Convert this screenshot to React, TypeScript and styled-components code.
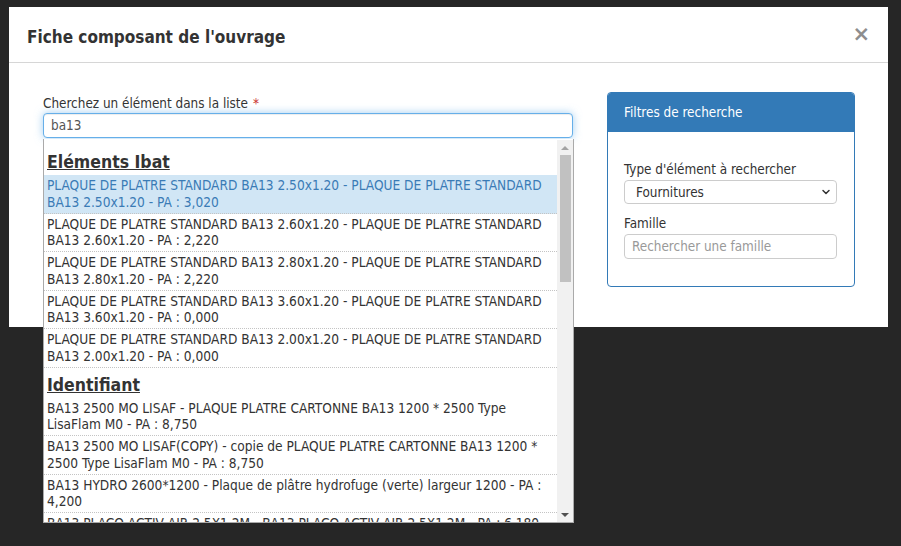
import React from "react";
import styled, { createGlobalStyle } from "styled-components";
import { ChevronDown } from "lucide-react";

const FONT = `"DejaVu Sans Condensed", "DejaVu Sans", Verdana, sans-serif`;

const GlobalStyle = createGlobalStyle`
  html, body {
    margin: 0;
    padding: 0;
    background: #262626;
    font-family: ${FONT};
  }
  * { box-sizing: border-box; }
`;

const Page = styled.div`
  min-height: 546px;
  padding: 7px 13px 0 9px;
`;

const Modal = styled.div`
  width: 879px;
  background: #fff;
`;

const Header = styled.div`
  height: 56px;
  display: flex;
  align-items: center;
  justify-content: space-between;
  padding: 0 18px 0 18px;
  border-bottom: 1px solid #d6d6d6;
`;

const Title = styled.h4`
  margin: 4px 0 0;
  font-size: 17px;
  font-weight: bold;
  color: #333;
  line-height: 20px;
`;

const Close = styled.button`
  border: 0;
  background: transparent;
  padding: 0;
  font-family: "DejaVu Sans", sans-serif;
  font-size: 21px;
  font-weight: bold;
  line-height: 1;
  color: #8e8e8e;
  cursor: pointer;
`;

const Body = styled.div`
  display: flex;
  gap: 33px;
  padding: 29px 33px 40px 34px;
`;

const LeftCol = styled.div`
  width: 531px;
  padding-top: 3px;
`;

const Label = styled.label`
  display: block;
  font-size: 13.4px;
  line-height: 18px;
  color: #333;
`;

const Required = styled.span`
  color: #c9302c;
  margin-left: 5px;
`;

const SearchWrap = styled.div`
  position: relative;
  width: 531px;
`;

const SearchInput = styled.input`
  display: block;
  width: 530px;
  height: 25px;
  padding: 0 7px;
  border: 1px solid #66afe9;
  border-radius: 4px;
  outline: none;
  font-family: ${FONT};
  font-size: 13.4px;
  color: #555;
  box-shadow: inset 0 1px 1px rgba(0, 0, 0, 0.075), 0 0 8px rgba(102, 175, 233, 0.6);
`;

const Dropdown = styled.div`
  position: absolute;
  top: 26px;
  left: 0;
  width: 531px;
  height: 384px;
  display: flex;
  background: #fff;
  border: 1px solid #aaa;
  border-top: none;
  z-index: 10;
`;

const List = styled.ul`
  flex: 1;
  list-style: none;
  margin: 0;
  padding: 6px 0 0;
  overflow: hidden;
`;

const Scrollbar = styled.div`
  width: 16px;
  margin-top: 1px;
  display: flex;
  flex-direction: column;
  background: #f1f1f1;
`;

const ScrollButton = styled.div`
  height: 15px;
  display: flex;
  align-items: center;
  justify-content: center;
`;

const Track = styled.div`
  flex: 1;
  padding: 0 2px 0 3px;
`;

const Thumb = styled.div`
  height: 127px;
  background: #c1c1c1;
`;

const GroupHeading = styled.li`
  padding: 5px 3px 1px;
  font-size: 17.5px;
  font-weight: bold;
  line-height: 24px;
  color: #333;
  text-decoration: underline;
`;

const Option = styled.li<{ $active?: boolean }>`
  padding: 2px 3px;
  font-size: 13.6px;
  line-height: 16.75px;
  color: ${(p) => (p.$active ? "#3a7bb5" : "#333")};
  background: ${(p) => (p.$active ? "#d1e6f5" : "transparent")};
  border-bottom: 1px dotted #c4c4c4;
  cursor: pointer;
`;

const RightCol = styled.div`
  width: 248px;
`;

const Panel = styled.div`
  border: 1px solid #337ab7;
  border-radius: 4px;
  overflow: hidden;
`;

const PanelHeading = styled.div`
  background: #337ab7;
  color: #fff;
  font-size: 13.4px;
  line-height: 39px;
  padding: 0 16px;
`;

const PanelBody = styled.div`
  padding: 29px 17px 27px 16px;
`;

const Field = styled.div<{ $gap?: number }>`
  margin-top: ${(p) => p.$gap ?? 0}px;
`;

const FieldLabel = styled.label`
  display: block;
  font-size: 13.4px;
  line-height: 18px;
  color: #333;
  margin-bottom: 1px;
`;

const SelectWrap = styled.div`
  position: relative;
  width: 213px;
`;

const Select = styled.select`
  display: block;
  width: 213px;
  height: 24px;
  padding: 0 24px 0 11px;
  border: 1px solid #ccc;
  border-radius: 4px;
  background: #fff;
  appearance: none;
  font-family: ${FONT};
  font-size: 13.4px;
  color: #333;
  outline: none;
`;

const Chevron = styled(ChevronDown)`
  position: absolute;
  right: 5px;
  top: 6px;
  pointer-events: none;
  color: #333;
`;

const TextInput = styled.input`
  display: block;
  width: 213px;
  height: 25px;
  padding: 0 7px;
  border: 1px solid #ccc;
  border-radius: 4px;
  outline: none;
  font-family: ${FONT};
  font-size: 13.4px;
  color: #555;
  &::placeholder {
    color: #999;
  }
`;

type Group = { title: string; items: string[] };

const groups: Group[] = [
  {
    title: "Eléments Ibat",
    items: [
      "PLAQUE DE PLATRE STANDARD BA13 2.50x1.20 - PLAQUE DE PLATRE STANDARD BA13 2.50x1.20 - PA : 3,020",
      "PLAQUE DE PLATRE STANDARD BA13 2.60x1.20 - PLAQUE DE PLATRE STANDARD BA13 2.60x1.20 - PA : 2,220",
      "PLAQUE DE PLATRE STANDARD BA13 2.80x1.20 - PLAQUE DE PLATRE STANDARD BA13 2.80x1.20 - PA : 2,220",
      "PLAQUE DE PLATRE STANDARD BA13 3.60x1.20 - PLAQUE DE PLATRE STANDARD BA13 3.60x1.20 - PA : 0,000",
      "PLAQUE DE PLATRE STANDARD BA13 2.00x1.20 - PLAQUE DE PLATRE STANDARD BA13 2.00x1.20 - PA : 0,000",
    ],
  },
  {
    title: "Identifiant",
    items: [
      "BA13 2500 MO LISAF - PLAQUE PLATRE CARTONNE BA13 1200 * 2500 Type LisaFlam M0 - PA : 8,750",
      "BA13 2500 MO LISAF(COPY) - copie de PLAQUE PLATRE CARTONNE BA13 1200 * 2500 Type LisaFlam M0 - PA : 8,750",
      "BA13 HYDRO 2600*1200 - Plaque de plâtre hydrofuge (verte) largeur 1200 - PA : 4,200",
      "BA13 PLACO ACTIV AIR 2.5X1.2M - BA13 PLACO ACTIV AIR 2.5X1.2M - PA : 6,180",
      "BA13 PLACO DUO TECH 2.6X1.2M - PLAQUE PLACO DUO'TECH BA13 2.60x1.20 - PA : 9,340",
    ],
  },
];

function UpArrow({ color }: { color: string }) {
  return (
    <svg width="8" height="4" viewBox="0 0 8 4" aria-hidden="true">
      <path d="M0 4 L4 0 L8 4 Z" fill={color} />
    </svg>
  );
}

function DownArrow({ color }: { color: string }) {
  return (
    <svg width="8" height="4" viewBox="0 0 8 4" aria-hidden="true">
      <path d="M0 0 L8 0 L4 4 Z" fill={color} />
    </svg>
  );
}

export default function App() {
  return (
    <>
      <GlobalStyle />
      <Page>
        <Modal>
          <Header>
            <Title>Fiche composant de l'ouvrage</Title>
            <Close aria-label="Fermer">×</Close>
          </Header>
          <Body>
            <LeftCol>
              <Label htmlFor="search">
                Cherchez un élément dans la liste<Required>*</Required>
              </Label>
              <SearchWrap>
                <SearchInput id="search" defaultValue="ba13" />
                <Dropdown>
                  <List>
                    {groups.map((g, gi) => (
                      <React.Fragment key={g.title}>
                        <GroupHeading>{g.title}</GroupHeading>
                        {g.items.map((it, ii) => (
                          <Option key={it} $active={gi === 0 && ii === 0}>
                            {it}
                          </Option>
                        ))}
                      </React.Fragment>
                    ))}
                  </List>
                  <Scrollbar>
                    <ScrollButton>
                      <UpArrow color="#a3a3a3" />
                    </ScrollButton>
                    <Track>
                      <Thumb />
                    </Track>
                    <ScrollButton>
                      <DownArrow color="#505050" />
                    </ScrollButton>
                  </Scrollbar>
                </Dropdown>
              </SearchWrap>
            </LeftCol>
            <RightCol>
              <Panel>
                <PanelHeading>Filtres de recherche</PanelHeading>
                <PanelBody>
                  <Field>
                    <FieldLabel>Type d'élément à rechercher</FieldLabel>
                    <SelectWrap>
                      <Select defaultValue="Fournitures">
                        <option>Fournitures</option>
                        <option>Main d'oeuvre</option>
                        <option>Matériel</option>
                      </Select>
                      <Chevron size={12} strokeWidth={3} />
                    </SelectWrap>
                  </Field>
                  <Field $gap={11}>
                    <FieldLabel>Famille</FieldLabel>
                    <TextInput placeholder="Rechercher une famille" />
                  </Field>
                </PanelBody>
              </Panel>
            </RightCol>
          </Body>
        </Modal>
      </Page>
    </>
  );
}
